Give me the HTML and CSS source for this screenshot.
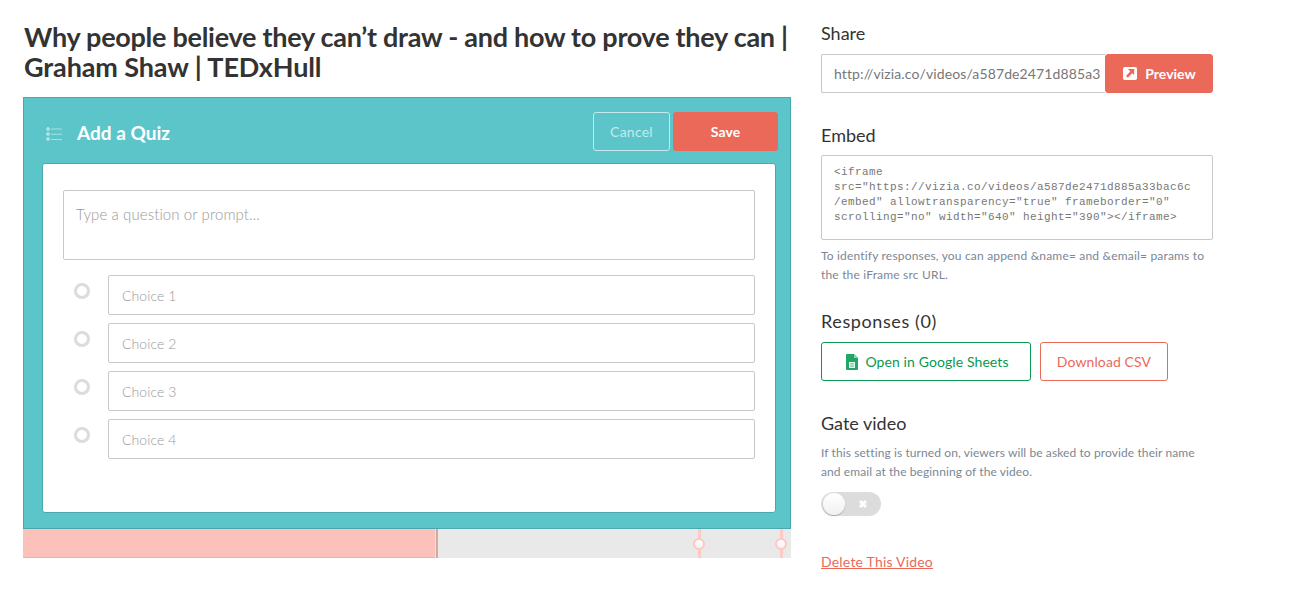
FILE: index.html
```
<!DOCTYPE html>
<html lang="en">
<head>
<meta charset="utf-8">
<title>Vizia</title>
<link rel="stylesheet" href="styles.css">
</head>
<body>
<div class="page">
  <main class="editor">
    <h1 class="title">Why people believe they can’t draw - and how to prove they can |<br><span class="title-end">Graham Shaw | TEDxHull</span></h1>
    <section class="quiz">
      <header class="quiz-head">
        <svg class="list-icon" width="16" height="14" viewBox="0 0 16 14">
          <g fill="#a9dfe2"><path d="M1 0h2v1h1v2H3v1H1V3H0V1h1zM1 5h2v1h1v2H3v1H1V8H0V6h1zM1 10h2v1h1v2H3v1H1v-1H0v-2h1z"/><path d="M5 1.5h11v1H5zM5 6.8h11v1H5zM5 12h11v1H5z"/></g>
        </svg>
        <h2 class="quiz-title">Add a Quiz</h2>
        <button class="btn cancel">Cancel</button>
        <button class="btn save">Save</button>
      </header>
      <div class="quiz-body">
        <div class="field prompt">Type a question or prompt...</div>
        <div class="choice"><span class="radio"></span><div class="field">Choice 1</div></div>
        <div class="choice"><span class="radio"></span><div class="field">Choice 2</div></div>
        <div class="choice"><span class="radio"></span><div class="field">Choice 3</div></div>
        <div class="choice"><span class="radio"></span><div class="field">Choice 4</div></div>
      </div>
    </section>
    <div class="timeline">
      <div class="played"></div>
      <div class="playhead"></div>
      <span class="pin pin-first"></span>
      <span class="pin pin-last"></span>
    </div>
  </main>
  <aside class="side">
    <h3 class="heading">Share</h3>
    <div class="share">
      <div class="url">http://vizia.co/videos/a587de2471d885a3</div>
      <button class="btn preview">
        <svg width="14" height="13" viewBox="0 0 14 13"><rect width="14" height="13" rx="1.8" fill="#fff"/><path d="M5 2h6.2v6L9.2 6.2 4.9 10.7 3 8.9 7.2 4.4z" fill="#ea6959"/></svg>
        <span>Preview</span>
      </button>
    </div>
    <h3 class="heading embed-heading">Embed</h3>
    <div class="code">&lt;iframe<br>src="https://vizia.co/videos/a587de2471d885a33bac6c<br>/embed" allowtransparency="true" frameborder="0"<br>scrolling="no" width="640" height="390"&gt;&lt;/iframe&gt;</div>
    <p class="help embed-help">To identify responses, you can append &amp;name= and &amp;email= params to<br>the the iFrame src URL.</p>
    <h3 class="heading responses-heading">Responses (0)</h3>
    <div class="exports">
      <button class="btn sheets">
        <svg width="12" height="16" viewBox="0 0 12 16"><path d="M1 0h7l4 4v11a1 1 0 0 1-1 1H1a1 1 0 0 1-1-1V1a1 1 0 0 1 1-1z" fill="#23a566"/><path d="M8 0l4 4H8z" fill="#8ed1b1"/><rect x="3" y="8" width="6" height="6" fill="#e6f5ed"/><path d="M4 9.5h4M4 11h4M4 12.5h4M6 9v4" stroke="#6cc297" stroke-width=".6"/></svg>
        <span>Open in Google Sheets</span>
      </button>
      <button class="btn csv">Download CSV</button>
    </div>
    <h3 class="heading gate-heading">Gate video</h3>
    <p class="help gate-help">If this setting is turned on, viewers will be asked to provide their name<br>and email at the beginning of the video.</p>
    <div class="toggle">
      <span class="knob"></span>
      <svg width="10" height="10" viewBox="0 0 10 10"><path d="M2 2l6 6M8 2L2 8" stroke="#fff" stroke-width="3"/></svg>
    </div>
    <a class="delete" href="#">Delete This Video</a>
  </aside>
</div>
</body>
</html>
```
FILE: styles.css
```
* { box-sizing: border-box; }
body {
  margin: 0;
  background: #fff;
  color: #333;
  font-family: Lato, "Open Sans", sans-serif;
}
h1, h2, h3, p { margin: 0; }
.page {
  display: flex;
  gap: 30px;
  padding: 22px 0 0 23px;
}
.editor { width: 768px; }
.title {
  font-size: 27px;
  line-height: 30px;
  height: 75px;
  padding-left: 1px;
  font-weight: 700;
  letter-spacing: -0.27px;
  white-space: nowrap;
}
.title-end { letter-spacing: -0.12px; }

/* Quiz panel */
.quiz {
  height: 432px;
  padding: 14px 14px 15px 18px;
  background: #5cc5ca;
  border: 1px solid #49a9ae;
}
.quiz-head {
  display: flex;
  align-items: center;
  height: 39px;
  margin: 0 -2px 12px 4px;
}
.list-icon { margin-top: 4px; }
.quiz-title {
  flex: 1;
  margin-left: 15px;
  padding-top: 3px;
  color: #fff;
  font-size: 19px;
  line-height: 24px;
  font-weight: 700;
}
.btn {
  display: flex;
  align-items: center;
  justify-content: center;
  height: 39px;
  padding: 0;
  border: 1px solid;
  border-radius: 3px;
  background: transparent;
  font: 400 14px/20px Lato, "Open Sans", sans-serif;
  letter-spacing: 0.1px;
  white-space: nowrap;
}
.cancel {
  width: 77px;
  color: #c4eaec;
  border-color: #c4eaec;
  letter-spacing: 0.25px;
}
.save {
  width: 105px;
  margin-left: 3px;
  color: #fff;
  background: #ea6959;
  border-color: #ea6959;
  font-weight: 700;
}
.quiz-body {
  width: 734px;
  height: 350px;
  padding: 26px 20px 0;
  background: #fff;
  border: 1px solid #49a9ae;
  border-radius: 3px;
}
.field {
  flex: 1;
  height: 40px;
  padding: 10px 13px;
  border: 1px solid #c8c8c8;
  border-radius: 2px;
  color: #999;
  font-size: 14px;
  font-weight: 300;
  line-height: 20px;
  letter-spacing: 0.1px;
}
.prompt {
  height: 70px;
  margin-bottom: 15px;
  padding: 13px 12px;
  font-size: 15px;
}
.choice {
  display: flex;
  margin-bottom: 8px;
}
.radio {
  width: 16px;
  height: 16px;
  margin: 8px 18px 0 11px;
  border: 3px solid #dcdcdc;
  border-radius: 50%;
}

/* Timeline */
.timeline {
  position: relative;
  display: flex;
  height: 29px;
  background: #e9e9e9;
}
.played {
  width: 412px;
  background: #fcc1bb;
  border-bottom: 1px solid #e8b4ae;
}
.playhead {
  width: 3px;
  background: #d9a7a1;
  border-left: 1px solid #f6dcd9;
}
.pin {
  position: absolute;
  top: 0;
  width: 3px;
  height: 29px;
  background: #ffcac5;
}
.pin::after {
  content: "";
  position: absolute;
  box-sizing: border-box;
  top: 9px;
  left: -5px;
  width: 12px;
  height: 12px;
  border: 2px solid #ffc6c0;
  border-radius: 50%;
  background: linear-gradient(#fff, #f2f2f2);
}
.pin-first { left: 675px; }
.pin-last { left: 757px; }

/* Sidebar */
.side { width: 392px; }
.heading {
  height: 32px;
  font-size: 18px;
  line-height: 22px;
  font-weight: 400;
}
.share { display: flex; }
.url {
  width: 284px;
  height: 39px;
  padding: 9px 3px 9px 12px;
  border: 1px solid #c8c8c8;
  border-right: 0;
  border-radius: 2px 0 0 2px;
  color: #777;
  font-size: 14px;
  line-height: 20px;
  letter-spacing: 0.12px;
  white-space: nowrap;
}
.preview {
  gap: 8px;
  width: 108px;
  padding-left: 1px;
  color: #fff;
  background: #ea6959;
  border-color: #ea6959;
  font-weight: 700;
  letter-spacing: 0;
}
.embed-heading { margin-top: 31px; height: 31px; }
.code {
  height: 85px;
  padding: 9px 12px;
  border: 1px solid #c8c8c8;
  border-radius: 2px;
  color: #777;
  font: 11px/15px "Liberation Mono", monospace;
  letter-spacing: 0.4px;
  white-space: nowrap;
}
.help {
  color: #7b8794;
  font-size: 12px;
  line-height: 19px;
  letter-spacing: 0.18px;
  white-space: nowrap;
}
.embed-help { margin-top: 6px; }
.responses-heading { margin-top: 26px; letter-spacing: 0.6px; }
.exports {
  display: flex;
  gap: 9px;
}
.sheets {
  gap: 7px;
  width: 210px;
  padding-left: 3px;
  color: #0a9850;
  border-color: #0a9850;
}
.csv {
  width: 128px;
  color: #ea6959;
  border-color: #ea6959;
}
.gate-heading { margin-top: 31px; }
.gate-help { margin-top: -1px; letter-spacing: 0.1px; }
.toggle {
  display: flex;
  align-items: center;
  gap: 13px;
  width: 60px;
  height: 24px;
  margin-top: 11px;
  border-radius: 12px;
  background: #dcdcdc;
}
.knob {
  width: 22px;
  height: 22px;
  margin-left: 2px;
  border-radius: 50%;
  background: linear-gradient(#fff, #f1f1f1);
  box-shadow: 0 1px 1px rgba(0, 0, 0, 0.25);
}
.delete {
  display: inline-block;
  margin-top: 36px;
  color: #ea6959;
  font-size: 14px;
  line-height: 20px;
  letter-spacing: 0.2px;
}
```
